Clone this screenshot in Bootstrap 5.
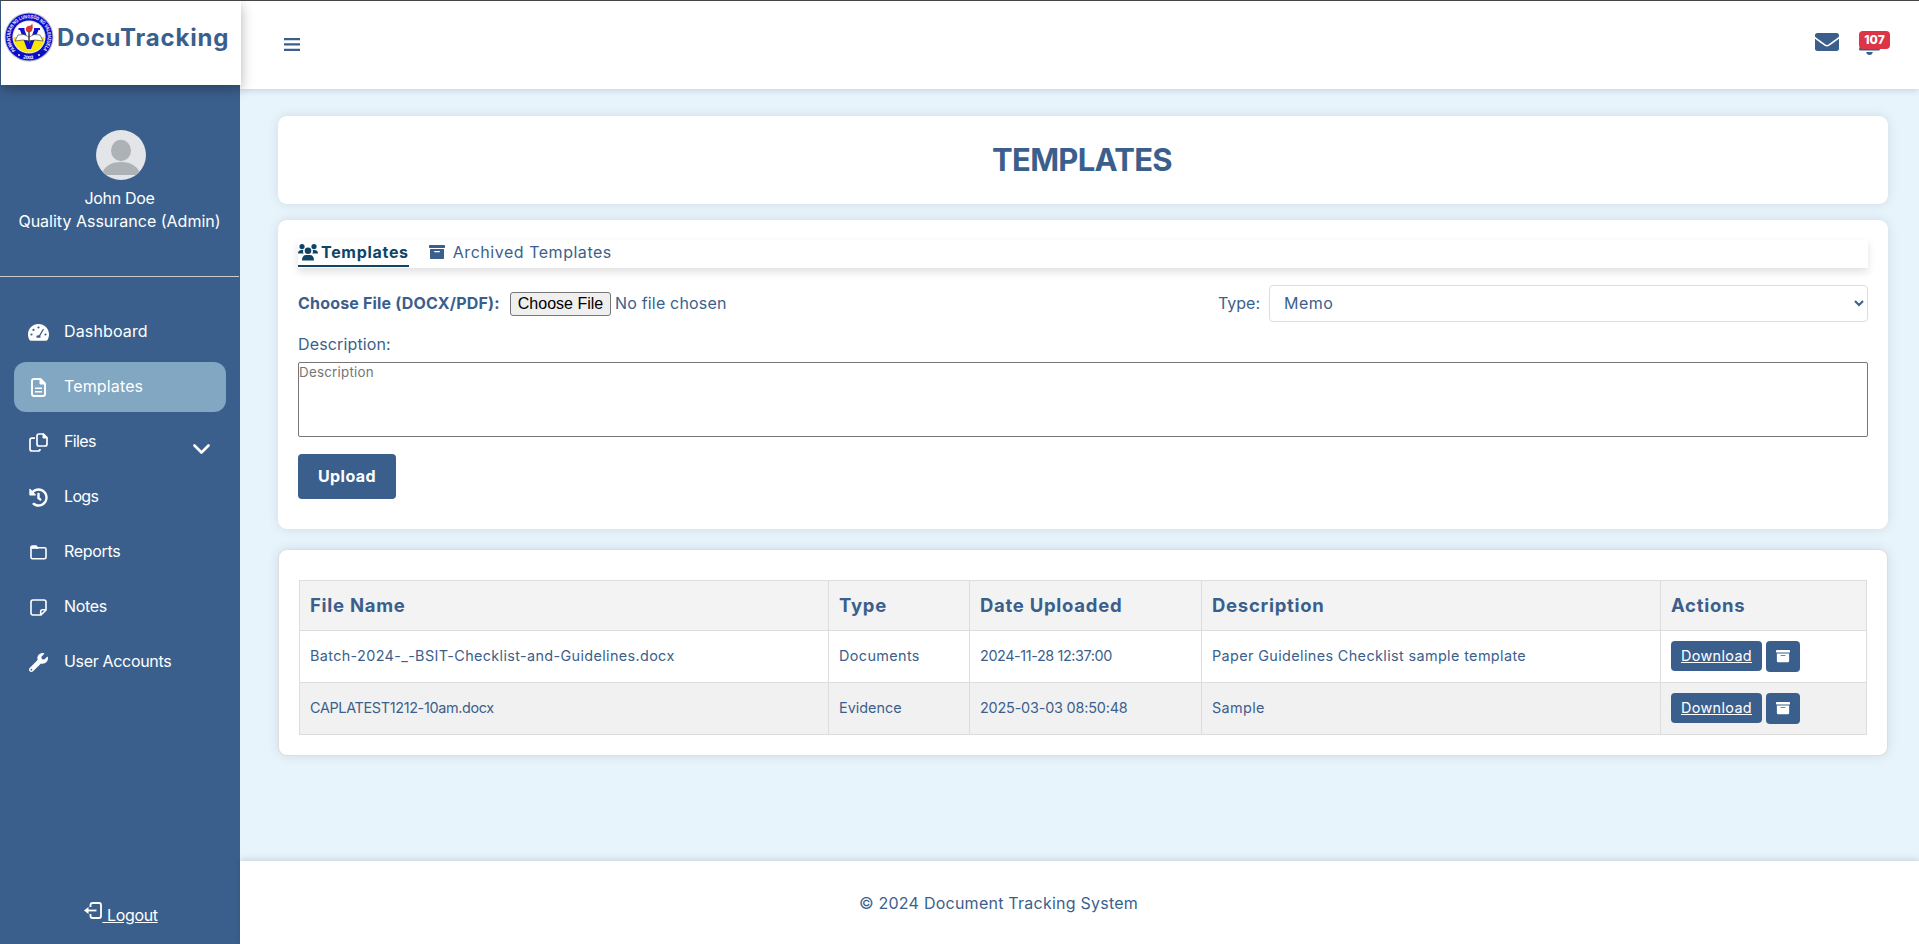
<!DOCTYPE html>
<html lang="en">
<head>
<meta charset="utf-8">
<meta name="viewport" content="width=device-width, initial-scale=1">
<title>DocuTracking - Templates</title>
<link href="https://cdn.jsdelivr.net/npm/bootstrap@5.3.0/dist/css/bootstrap.min.css" rel="stylesheet">
<style>
:root { --blue: #3b5f8c; --deep: #0e4567; }
body { font-family: Inter, "Noto Sans", sans-serif; font-size: 16px; line-height: 24px; color: var(--blue); background: #e7f4fc; border-top: 1px solid #454545; height: 944px; overflow: hidden; }
.ls-n3 { letter-spacing: -.33px; } .ls-n6 { letter-spacing: -.65px; } .ls-p1 { letter-spacing: .14px; } .ls-p2 { letter-spacing: .24px; } .ls-p5 { letter-spacing: .53px; } .ls-tab { letter-spacing: .7px; }
.side { width: 240px; background: var(--blue); color: #fff; }
.brand { width: 240px; height: 84px; margin-left: 1px; padding: 11px 0 0 3px; background: #fff; color: var(--blue); box-shadow: 0 4px 12px rgba(0,0,0,.3); position: relative; z-index: 3; }
.brand-name { font-size: 24px; font-weight: 700; letter-spacing: .8px; line-height: 30px; margin: 11px 0 0 3px; }
.profile { height: 192px; padding-top: 45px; border-bottom: 1px solid #ccc; margin-right: 1px; line-height: 23px; }
.avatar { margin: 0 0 7px 2px; }
.menu { padding: 30px 14px 0; gap: 5px; }
.menu a { height: 50px; border-radius: 12px; color: #fff; padding: 0 16px 0 14px; text-decoration: none; }
.menu a.active { background: #82a7c3; }
.menu .ico { width: 21px; margin-right: 15px; text-align: center; line-height: 0; }
.menu .lbl { padding-bottom: 2px; }
.menu .caret { margin-top: 13px; }
.out { padding: 0 0 17px 2px; color: #fff; }
.out svg { margin-bottom: 8px; }
.topbar { height: 88px; background: #fff; box-shadow: 0 2px 6px rgba(0,0,0,.12); padding: 0 29px 2px 44px; position: relative; z-index: 2; }
.main-col { min-width: 0; }
.content { padding: 27px 31px 0 38px; }
.panel { background: #fff; border-radius: 9px; box-shadow: 0 0 12px rgba(0,0,0,.1); }
.title-panel { height: 88px; margin-bottom: 16px; }
.title-panel h1 { font-size: 31px; font-weight: 700; letter-spacing: -.7px; line-height: 40px; margin: 0 2px 0 0; }
.form-panel { height: 309px; padding: 20px; margin-bottom: 20px; }
.tabs { height: 28px; box-shadow: 0 4px 8px rgba(0,0,0,.12); margin-bottom: 17px; gap: 20px; }
.tabs a { text-decoration: none; color: var(--blue); height: 27px; display: flex; align-items: center; border-bottom: 2px solid transparent; padding-bottom: 1px; }
.tabs a.active { color: var(--deep); font-weight: 700; border-color: var(--deep); }
.tabs .group-ico { margin-right: 3px; }
.file-row { height: 37px; }
.file-row label { padding-bottom: 1px; }
.file-label { font-weight: 700; width: 212px; letter-spacing: .18px; }
.file-in { font-size: 16px; letter-spacing: .18px; line-height: 24px; color: var(--blue); }
.file-in::file-selector-button { font: 16px/18px "Liberation Sans", sans-serif; letter-spacing: 0; width: 101px; height: 24px; padding: 1px 6px; margin: 0 4px 0 0; color: #000; background: #efefef; border: 1px solid #767676; border-radius: 3px; }
.type-sel { width: 599px; height: 37px; border: 1px solid #ddd; border-radius: 4px; color: var(--blue); background: #fff; padding: 0 10px 1px; letter-spacing: .5px; margin-left: 9px; }
.desc-label { margin: 10px 0 6px; }
.desc { display: block; width: 100%; height: 75px; border: 1px solid #767676; border-radius: 2px; padding: 0; resize: none; font-size: 13.33px; line-height: 18px; letter-spacing: .26px; }
.desc::placeholder { color: #757575; }
.btn-up { background: var(--blue); color: #fff; font-weight: 700; width: 98px; height: 45px; border-radius: 4px; border: 0; padding: 0 0 1px; letter-spacing: .45px; margin-top: 17px; }
.table-panel { border: 1px solid #dcdedf; height: 207px; padding: 30px 20px 0; }
.grid { width: 1568px; table-layout: fixed; border-collapse: collapse; font-size: 14.4px; }
.grid th, .grid td { border: 1px solid #ddd; padding: 0 10px 1px; vertical-align: middle; height: 52px; white-space: nowrap; }
.grid th { background: #f3f3f3; font-size: 18.5px; font-weight: 700; letter-spacing: .72px; height: 50px; }
.grid tr.alt td { background: #f1f1f1; }
.grid .words { letter-spacing: .38px; }
.grid .fn { letter-spacing: .36px; }
.grid .stamp { letter-spacing: -.4px; }
.grid .stamp2 { letter-spacing: -.18px; }
.grid td.acts { padding-bottom: 0; }
.btn-dl { background: var(--blue); color: #fff; border-radius: 4px; width: 91px; height: 30px; letter-spacing: .35px; }
.btn-ar { background: var(--blue); color: #fff; border: 0; border-radius: 4px; width: 34px; height: 31px; padding: 0 0 2px; line-height: 0; }
.foot { height: 83px; background: #fff; box-shadow: 0 -2px 6px rgba(0,0,0,.12); padding-right: 162px; }
.notif { position: absolute; left: 0; top: -1px; width: 31px; height: 18px; font-size: 12px; line-height: 17px; padding: 0; font-weight: 800; border-radius: 4px; }
</style>
</head>
<body>
<svg width="0" height="0" class="position-absolute">
  <symbol id="archive" viewBox="0 0 512 512"><path fill="currentColor" d="M32 448c0 17.700 14.300 32 32 32h384c17.700 0 32-14.300 32-32V160H32v288zm128-206c0-10 8-18 18-18h156c10 0 18 8 18 18s-8 18-18 18H178c-10 0-18-8-18-18zM480 32H32C14.300 32 0 46.300 0 64v48c0 8.800 7.200 16 16 16h480c8.800 0 16-7.200 16-16V64c0-17.700-14.300-32-32-32z"/></symbol>
</svg>
<div class="d-flex h-100">
  <aside class="side d-flex flex-column flex-shrink-0">
    <div class="brand d-flex align-items-start">
      <svg width="50" height="50" viewBox="0 0 50 50" class="flex-shrink-0">
        <circle cx="25" cy="25" r="24.500" fill="#b9b9c9"/><circle cx="25" cy="25" r="23.500" fill="#0d0dc8"/>
        <circle cx="25" cy="25" r="16.600" fill="#e8e6d0"/><circle cx="25" cy="25" r="15.500" fill="#fff"/>
        <path d="M9.500 25h31a15.500 15.500 0 0 1-31 0z" fill="#fbe60a"/>
        <path d="M14.500 16h6v2l4.800 13L30 18v-2h6v2h-1.500L27 37h-4L16 18h-1.500z" fill="#1111d2"/>
        <path d="M14 23q6-2 11 2 5-4 11-2l3 6q-9-2-14 0-5-2-14 0z" fill="#fff" stroke="#333" stroke-width=".6"/>
        <path d="M25 20v10" stroke="#222" stroke-width="1.300"/><path d="M23 20q-3-4 1-6 4 0 4-3 2 5-1 9z" fill="#d93a2b"/>
        <path id="ring" d="M11.700 38.300A18.800 18.800 0 1 1 38.300 38.300" fill="none"/><path id="ring2" d="M17 45.500q8 3.500 16 0" fill="none"/>
        <text font-family="Liberation Sans" font-size="5" font-weight="700" fill="#fff"><textPath href="#ring" textLength="87" lengthAdjust="spacingAndGlyphs">PAMANTASAN NG LUNGSOD NG VALENZUELA</textPath></text>
        <text font-family="Liberation Sans" font-size="5" font-weight="700" fill="#fff"><textPath href="#ring2" startOffset="2">2002</textPath></text>
        <circle cx="15" cy="43" r=".9" fill="#fff"/><circle cx="35" cy="43" r=".9" fill="#fff"/>
      </svg>
      <span class="brand-name">DocuTracking</span>
    </div>
    <div class="profile d-flex flex-column align-items-center">
      <svg width="50" height="50" viewBox="0 0 50 50" class="avatar flex-shrink-0"><defs><clipPath id="av"><circle cx="25" cy="25" r="25"/></clipPath></defs><g clip-path="url(#av)"><path fill="#e3e5e8" d="M0 0h50v50H0z"/><ellipse cx="25" cy="20.500" rx="10" ry="10.700" fill="#adb2b6"/><path d="M5 45q5-13 20-13t20 13z" fill="#adb2b6"/></g></svg>
      <span class="ls-n3">John Doe</span><span>Quality Assurance (Admin)</span>
    </div>
    <nav class="menu nav flex-column flex-nowrap">
      <a href="#" class="d-flex align-items-center"><span class="ico"><svg width="21" height="17" viewBox="0 0 21 17"><path fill="#fff" d="M10.500 0C4.700 0 0 4.600 0 10.300c0 2 .5 3.900 1.400 5.500.3.600.9.900 1.500.9h15.200c.6 0 1.200-.3 1.500-.9.900-1.600 1.400-3.500 1.400-5.500C21 4.600 16.300 0 10.500 0z"/><g fill="#3b5f8c"><circle cx="10.500" cy="3.500" r="1.100"/><circle cx="5.500" cy="5.900" r="1.100"/><circle cx="3.500" cy="10.500" r="1.100"/><circle cx="17.500" cy="10.500" r="1.100"/></g><path d="M15.200 5.500l-4 6.800" stroke="#3b5f8c" stroke-width="1.300" stroke-linecap="round"/><path d="M8.500 13.800a2 2 0 1 1 3.900 0z" fill="#3b5f8c"/></svg></span><span class="lbl ls-p1">Dashboard</span></a>
      <a href="#" class="active d-flex align-items-center"><span class="ico"><svg width="15" height="19" viewBox="0 0 15 19" fill="none" stroke="#fff" stroke-width="1.900"><path d="M1 3q0-2 2-2h6.500L14 5.500V16q0 2-2 2H3q-2 0-2-2z"/><path d="M9 .8V6h5z" fill="#fff" stroke-width="1"/><path d="M4 10.200h7M4 13.800h7" stroke-width="1.500"/></svg></span><span class="lbl ls-p1">Templates</span></a>
      <a href="#" class="d-flex align-items-center"><span class="ico"><svg width="19" height="19" viewBox="0 0 19 19" fill="none" stroke="#fff" stroke-width="1.700"><path d="M8 3q0-2 2-2h4.500L18 4.500V11q0 2-2 2h-6q-2 0-2-2z"/><path d="M14 .8V5h4z" fill="#fff" stroke-width="1"/><path d="M6 5.200H3q-2 0-2 2V16q0 2 2 2h6q2 0 2-2"/></svg></span><span class="lbl ls-n6">Files</span><svg width="17" height="10" viewBox="0 0 17 10" class="caret ms-auto" fill="none" stroke="#fff" stroke-width="2.600" stroke-linecap="round" stroke-linejoin="round"><path d="M1.500 1.500l7 7 7-7"/></svg></a>
      <a href="#" class="d-flex align-items-center"><span class="ico"><svg width="19" height="19" viewBox="0 0 512 512"><path fill="#fff" d="M504 255.531c.253 136.640-111.180 248.372-247.820 248.468-59.015.042-113.223-20.530-155.822-54.911-11.077-8.940-11.905-25.541-1.839-35.607l11.267-11.267c8.609-8.609 22.353-9.551 31.891-1.984C173.062 425.135 212.781 440 256 440c101.705 0 184-82.311 184-184 0-101.705-82.311-184-184-184-48.814 0-93.149 18.969-126.068 49.932l50.754 50.754c10.080 10.080 2.941 27.314-11.313 27.314H24c-8.837 0-16-7.163-16-16V38.627c0-14.254 17.234-21.393 27.314-11.314l49.372 49.372C129.209 34.136 189.552 8 256 8c136.810 0 247.747 110.780 248 247.531zm-180.912 78.784l9.823-12.630c8.138-10.463 6.253-25.542-4.210-33.679L288 256.349V152c0-13.255-10.745-24-24-24h-16c-13.255 0-24 10.745-24 24v135.651l65.409 50.874c10.463 8.137 25.541 6.253 33.679-4.210z"/></svg></span><span class="lbl ls-n6">Logs</span></a>
      <a href="#" class="d-flex align-items-center"><span class="ico"><svg width="17" height="15" viewBox="0 0 17 15" fill="none" stroke="#fff" stroke-width="1.600"><path d="M1 2.500Q1 1 2.500 1H6l1.500 1.800h7q1.500 0 1.500 1.500v8q0 1.500-1.500 1.500h-12Q1 13.800 1 12.300z"/><path d="M1 3V1.500h5.500L8 3.300H1z" fill="#fff" stroke-width="1"/></svg></span><span class="lbl ls-n3">Reports</span></a>
      <a href="#" class="d-flex align-items-center"><span class="ico"><svg width="17" height="17" viewBox="0 0 17 17" fill="none" stroke="#fff" stroke-width="1.600"><path d="M3 1h11q2 0 2 2v8l-5 5H3q-2 0-2-2V3q0-2 2-2z" stroke-linejoin="round"/><path d="M10.700 16v-3.500q0-1.800 1.800-1.800H16" /></svg></span><span class="lbl ls-n3">Notes</span></a>
      <a href="#" class="d-flex align-items-center"><span class="ico"><svg width="19" height="19" viewBox="0 0 512 512"><path fill="#fff" d="M507.730 109.100c-2.240-9.030-13.540-12.090-20.120-5.510l-74.360 74.360-67.880-11.310-11.310-67.880 74.360-74.360c6.620-6.620 3.430-17.900-5.660-20.160-47.380-11.740-99.550.910-136.580 37.930-39.640 39.640-50.550 97.100-34.050 147.200L18.740 402.760c-24.990 24.990-24.990 65.510 0 90.500 24.990 24.990 65.510 24.990 90.500 0l213.210-213.210c50.120 16.710 107.470 5.680 147.370-34.220 37.070-37.070 49.700-89.320 37.910-136.730zM64 472c-13.250 0-24-10.750-24-24 0-13.260 10.750-24 24-24s24 10.740 24 24c0 13.250-10.750 24-24 24z"/></svg></span><span class="lbl ls-n3">User Accounts</span></a>
    </nav>
    <a href="#" class="out mt-auto d-flex justify-content-center align-items-end text-decoration-none"><svg width="18" height="17" viewBox="0 0 18 17" fill="none" stroke="#fff" stroke-width="1.800"><path d="M6.500 5V3q0-2 2-2H15q2 0 2 2v11q0 2-2 2H8.500q-2 0-2-2v-2"/><path d="M12.500 8.500H3"/><path d="M0 8.500L4.500 5v7z" fill="#fff" stroke="none"/></svg><u class="ls-p1">&nbsp;<span class="ls-n3">Logout</span></u></a>
  </aside>
  <div class="main-col flex-grow-1 d-flex flex-column">
    <header class="topbar d-flex align-items-center">
      <svg width="16" height="13" viewBox="0 0 16 13" fill="#3b5f8c"><path d="M0 0h16v2.200H0zM0 5.300h16v2.200H0zM0 10.700h16v2.200H0z"/></svg>
      <svg width="24" height="24" viewBox="0 0 512 512" class="ms-auto mb-1"><path fill="#3b5f8c" d="M502.300 190.800c3.900-3.100 9.700-.2 9.700 4.700V400c0 26.500-21.500 48-48 48H48c-26.500 0-48-21.500-48-48V195.600c0-5 5.700-7.800 9.700-4.700 22.400 17.400 52.100 39.500 154.100 113.600 21.100 15.400 56.700 47.800 92.200 47.600 35.700.3 72-32.800 92.300-47.600 102-74.100 131.600-96.300 154-113.700zM256 320c23.200.4 56.600-29.200 73.400-41.400 132.700-96.300 142.800-104.700 173.400-128.700 5.800-4.500 9.200-11.500 9.200-18.900v-19c0-26.500-21.500-48-48-48H48c-26.500 0-48 21.500-48 48v19c0 7.400 3.400 14.300 9.200 18.900 30.600 23.900 40.700 32.400 173.400 128.700 16.800 12.200 50.200 41.800 73.400 41.400z"/></svg>
      <span class="position-relative d-flex ms-3 ps-1"><svg width="31" height="24" viewBox="0 0 31 24"><path fill="#3b5f8c" d="M10.500 0C5 0 3.500 5 3.500 9c0 4-2.500 5.500-3.300 7.500-.4 1.200.3 2 1.300 2h18c1 0 1.700-.8 1.300-2-.8-2-3.300-3.500-3.300-7.500 0-4-1.500-9-7-9zM7.300 20h6.400c0 1.800-1.400 3-3.200 3s-3.200-1.200-3.200-3z"/></svg><span class="badge text-bg-danger notif ms-1">107</span></span>
    </header>
    <main class="content flex-grow-1">
      <section class="panel title-panel d-flex align-items-center justify-content-center"><h1>TEMPLATES</h1></section>
      <section class="panel form-panel">
        <nav class="tabs d-flex">
          <a href="#" class="active"><svg width="20" height="17" viewBox="0 0 20 17" fill="currentColor" class="group-ico"><circle cx="4" cy="2.600" r="2.600"/><circle cx="16" cy="2.600" r="2.600"/><path d="M0 9.500Q0 6 3.500 6h1.800q-.8 1.500.3 3.500zM20 9.500Q20 6 16.500 6h-1.800q.8 1.500-.3 3.500z"/><circle cx="10" cy="6.800" r="3.300"/><path d="M4 16.500Q4 11 8.300 11h3.400Q16 11 16 16.500z"/></svg><span class="ls-tab">Templates</span></a>
          <a href="#"><svg width="16" height="16" class="me-2"><use href="#archive"/></svg><span class="ls-p5">Archived Templates</span></a>
        </nav>
        <div class="file-row d-flex align-items-center">
          <label class="file-label" for="f">Choose File (DOCX/PDF):</label>
          <input type="file" id="f" class="file-in">
          <label for="t" class="ms-auto">Type:</label>
          <select id="t" class="type-sel"><option>Memo</option><option>Documents</option><option>Evidence</option></select>
        </div>
        <label for="d" class="desc-label d-block ls-p1">Description:</label>
        <textarea id="d" class="desc" placeholder="Description"></textarea>
        <button class="btn-up">Upload</button>
      </section>
      <section class="panel table-panel">
        <table class="grid">
          <colgroup><col width="529"><col width="141"><col width="232"><col width="459"><col width="206"></colgroup>
          <thead><tr><th>File Name</th><th>Type</th><th>Date Uploaded</th><th>Description</th><th>Actions</th></tr></thead>
          <tbody>
            <tr><td class="fn">Batch-2024-_-BSIT-Checklist-and-Guidelines.docx</td><td class="words">Documents</td><td class="stamp">2024-11-28 12:37:00</td><td class="words">Paper Guidelines Checklist sample template</td>
              <td class="acts"><div class="d-flex gap-1"><a href="#" class="btn-dl d-flex align-items-center justify-content-center">Download</a><button class="btn-ar"><svg width="14" height="14"><use href="#archive"/></svg></button></div></td></tr>
            <tr class="alt"><td class="ls-n3">CAPLATEST1212-10am.docx</td><td>Evidence</td><td class="stamp2">2025-03-03 08:50:48</td><td class="words">Sample</td>
              <td class="acts"><div class="d-flex gap-1"><a href="#" class="btn-dl d-flex align-items-center justify-content-center">Download</a><button class="btn-ar"><svg width="14" height="14"><use href="#archive"/></svg></button></div></td></tr>
          </tbody>
        </table>
      </section>
    </main>
    <footer class="foot d-flex align-items-center justify-content-center ls-p2">© 2024 Document Tracking System</footer>
  </div>
</div>
<script src="https://cdn.jsdelivr.net/npm/bootstrap@5.3.0/dist/js/bootstrap.bundle.min.js"></script>
</body>
</html>
